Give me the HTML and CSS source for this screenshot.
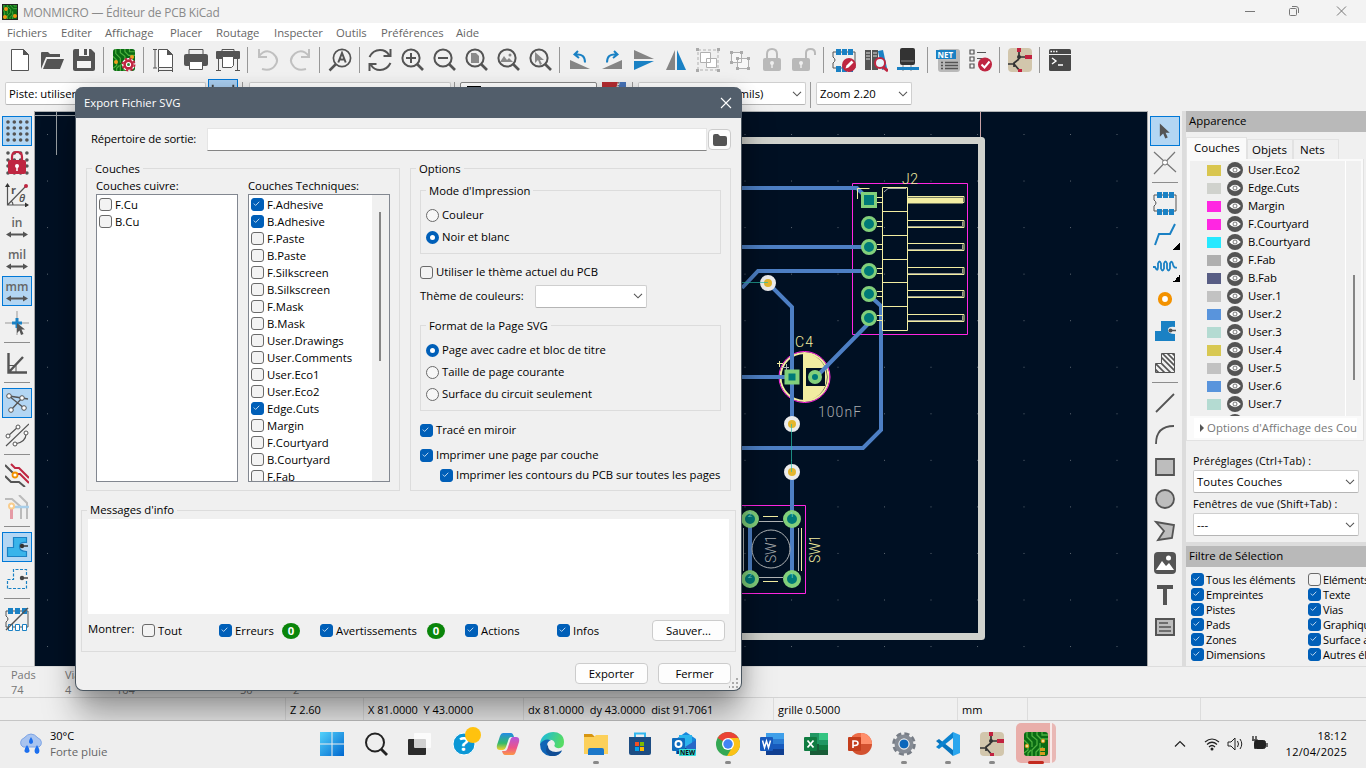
FILE: index.html
```html
<!DOCTYPE html>
<html lang="fr">
<head>
<meta charset="utf-8">
<title>MONMICRO — Éditeur de PCB KiCad</title>
<link rel="stylesheet" href="styles.css">
</head>
<body>
<svg class="defs" width="0" height="0">
<defs>
<symbol id="pcb" viewBox="0 0 24 24"><rect width="24" height="24" rx="3" fill="#0a6b14"/><path d="M3 0v5l5 5v5M8 0v4l5 4v5l-5 5v6M13 0v3l4 4h7M18 0v3h6M0 8l4 4v6l-4 3M4 24v-3l3-3M12 24v-4l4-4v-5M16 24v-6l3-3" fill="none" stroke="#4db13f" stroke-width="1.3"/></symbol>
<symbol id="mag" viewBox="0 0 24 24"><circle cx="11" cy="10" r="8.6" fill="none" stroke="#545454" stroke-width="2"/><path d="M17 16l6 6" stroke="#545454" stroke-width="2.6"/></symbol>
<symbol id="eye" viewBox="0 0 16 16"><circle cx="8" cy="8" r="8" fill="#545454"/><path d="M2.200 8Q8 1.500 13.800 8Q8 14.500 2.200 8z" fill="#fff"/><circle cx="8" cy="8" r="2" fill="#fff" stroke="#777"/></symbol>
<symbol id="tick" viewBox="0 0 13 13"><path d="M3.300 6.600l2.200 2.200 4.300-4.400" fill="none" stroke="#dcecf8" stroke-width="1"/></symbol>
<symbol id="chev" viewBox="0 0 10 6"><path d="M1 .8l4 4 4-4" fill="none" stroke="#555" stroke-width="1.100"/></symbol>
<symbol id="fp" viewBox="0 0 24 24"><path d="M1 4h22v16H1v-5q4-3 0-6z" fill="none" stroke="#545454"/><path d="M4 1h5v6H4zM10 1h5v6h-5zM16 1h5v6h-5zM4 18h5v6H4zM10 18h5v6h-5zM16 18h5v6h-5z" fill="#1a81c4"/></symbol>
<symbol id="lock" viewBox="0 0 24 24"><rect x="3" y="10" width="18" height="13" rx="2" fill="#b9b9b9"/><circle cx="12" cy="15" r="2" fill="#eee"/><path d="M12 15v5" stroke="#eee" stroke-width="1.500"/></symbol>
<symbol id="arrow" viewBox="0 0 24 24"><path d="M7 3v16l4-4 2.500 6 3-1.300-2.600-5.700h5z" fill="#545454"/></symbol>
<symbol id="unit" viewBox="0 0 24 24"><path d="M1 19.500l5-3v2h12v-2l5 3-5 3v-2H6v2z" fill="#545454"/></symbol>
<symbol id="sch" viewBox="0 0 24 24"><rect width="24" height="24" rx="4" fill="#d2c6ac"/><path d="M11 3v8M11 11l-5 4v4M0 16h7M6 16l6 7M11 9h12" fill="none" stroke="#333" stroke-width="1.700"/><path d="M11 0v4M17 9h7M12 21v3" stroke="#c22340" stroke-width="4"/><circle cx="11" cy="9" r="2" fill="#333"/></symbol>
</defs>
</svg>

<div class="screen">
  <header class="title"><svg class="app" viewBox="0 0 16 16"><use href="#pcb"/><g fill="#ef9415"><circle cx="4" cy="5" r="2"/><circle cx="3" cy="13" r="2"/><circle cx="13" cy="12" r="2"/></g><rect x=".5" y=".5" width="15" height="15" fill="none" stroke="#222"/></svg><span>MONMICRO — Éditeur de PCB KiCad</span>
    <svg class="winctl" viewBox="0 0 110 20"><path d="M6 9.500h10M98 4.500l9 9M107 4.500l-9 9M53 4.500h4q2.500 0 2.500 2.500v4" fill="none" stroke="#777"/><rect x="50.500" y="6.500" width="7" height="7" rx="1" fill="none" stroke="#777"/></svg>
  </header>
  <nav class="menu"><span style="width:54px">Fichiers</span><span style="width:44px">Editer</span><span style="width:65px">Affichage</span><span style="width:46px">Placer</span><span style="width:58px">Routage</span><span style="width:62px">Inspecter</span><span style="width:45px">Outils</span><span style="width:75px">Préférences</span><span>Aide</span></nav>

  <div class="toolbar">
    <svg viewBox="0 0 24 24"><path d="M3.500 1.500h12l5 5v16h-17z" fill="#fff" stroke="#545454"/><path d="M15 1v6h6z" fill="#545454"/></svg>
    <svg viewBox="0 0 24 24"><path d="M1 21V5q0-1 1-1h6l2 2h10v3H6z" fill="#545454"/><path d="M7 11h17l-4 10H3z" fill="#545454"/></svg>
    <svg viewBox="0 0 24 24"><path d="M1 3q0-2 2-2h16l4 4v16q0 2-2 2H3q-2 0-2-2z" fill="#545454"/><path d="M7 1h10v7H7zM5 13h14v7H5z" fill="#f4f4f4"/><path d="M12 1h3v6h-3z" fill="#545454"/></svg>
    <i></i>
    <svg viewBox="0 0 24 24"><use href="#pcb" x="1" y="1" width="22" height="22"/><circle cx="4" cy="14" r="2" fill="#efa020"/><circle cx="20" cy="9" r="2" fill="#efa020"/><circle cx="16.500" cy="16.500" r="6.500" fill="#fff"/><circle cx="16.500" cy="16.500" r="3.900" fill="#fff" stroke="#bf2641" stroke-width="2.600"/><circle cx="16.500" cy="16.500" r="6" fill="none" stroke="#bf2641" stroke-width="2" stroke-dasharray="2.400 2.310"/><circle cx="16.500" cy="16.500" r="1.500" fill="#2b8f38"/></svg>
    <i></i>
    <svg viewBox="0 0 24 24"><path d="M6.500 1.500h9l5 5v13h-14z" fill="#fff" stroke="#545454"/><path d="M15 1v6h6z" fill="#545454"/><path d="M1 1.500h4M3 1v19M1 20h4M6 22.500h15M6.500 20v4M20.500 20v4" fill="none" stroke="#545454"/></svg>
    <svg viewBox="0 0 24 24"><path d="M5 1.500h14v6H5z" fill="#eee" stroke="#545454"/><rect y="6" width="24" height="12" rx="2" fill="#545454"/><path d="M5.500 13.500h13v8h-13z" fill="#fff" stroke="#545454"/></svg>
    <svg viewBox="0 0 24 24"><path d="M6 1.500h12v3H6z" fill="#eee" stroke="#545454"/><rect y="3" width="24" height="8" rx="1" fill="#545454"/><path d="M2.500 10v13M21.500 10v13M0 22.500h5M19 22.500h5" stroke="#545454"/><path d="M6.500 8.500h11v9l-2 2h-9z" fill="#fff" stroke="#545454"/></svg>
    <i></i>
    <svg viewBox="0 0 24 24"><path d="M3 1v8h8M3 8q7-8 14-2.500 7 6 2 12-4 6-13 3.500" fill="none" stroke="#c0c0c0" stroke-width="2"/></svg>
    <svg viewBox="0 0 24 24"><path d="M21 1v8h-8M21 8q-7-8-14-2.500-7 6-2 12 4 6 13 3.500" fill="none" stroke="#c0c0c0" stroke-width="2"/></svg>
    <i></i>
    <svg viewBox="0 0 24 24"><circle cx="14" cy="10" r="8.600" fill="none" stroke="#545454" stroke-width="1.700"/><path d="M8 16l-6.500 6.500" stroke="#545454" stroke-width="2.500"/><path d="M10.300 14.500L14 5l3.700 9.500M11.500 11.500h5" fill="none" stroke="#545454" stroke-width="2"/></svg>
    <i></i>
    <svg viewBox="0 0 24 24"><path d="M1.500 9Q5 2 12 2q6 0 9 5M22.500 1v7h-7M22.500 15Q19 22 12 22q-6 0-9-5M1.500 23v-7h7" fill="none" stroke="#545454" stroke-width="2"/></svg>
    <svg viewBox="0 0 24 24"><use href="#mag"/><path d="M6 10h10M11 5v10" stroke="#545454" stroke-width="2"/></svg>
    <svg viewBox="0 0 24 24"><use href="#mag"/><path d="M6 10h10" stroke="#545454" stroke-width="2"/></svg>
    <svg viewBox="0 0 24 24"><use href="#mag"/><path d="M7 5h5l3 3v7H7z" fill="#8a8a8a"/></svg>
    <svg viewBox="0 0 24 24"><use href="#mag"/><path d="M4 14l4-6 3 4 2-2 4 4z" fill="#8a8a8a"/><circle cx="14" cy="7" r="1.500" fill="#8a8a8a"/></svg>
    <svg viewBox="0 0 24 24"><use href="#mag"/><path d="M7 4v11l3-3 2 5 2-1-2-4h4z" fill="#8a8a8a"/></svg>
    <i></i>
    <svg viewBox="0 0 24 24"><path d="M2 12v9h20z" fill="#858585"/><path d="M10 3L6.500 6.500 11 10M8 6.500q9-1 9 8" fill="none" stroke="#1a81c4" stroke-width="2"/></svg>
    <svg viewBox="0 0 24 24"><path d="M22 12v9H2z" fill="#858585"/><path d="M14 3l3.500 3.500L13 10M16 6.500q-9-1-9 8" fill="none" stroke="#1a81c4" stroke-width="2"/></svg>
    <svg viewBox="0 0 24 24"><path d="M2 2v9h20z" fill="#858585"/><path d="M2 22v-9h20z" fill="#1a81c4"/></svg>
    <svg viewBox="0 0 24 24"><path d="M2 22h9V2z" fill="#858585"/><path d="M22 22h-9V2z" fill="#1a81c4"/></svg>
    <svg viewBox="0 0 24 24"><path d="M2 2h20v20H2z" fill="none" stroke="#b0b0b0" stroke-dasharray="3 2"/><path d="M4.500 4.500h10v10h-10zM10.500 10.500h10v9h-10z" fill="#fff" stroke="#b0b0b0"/><path d="M0 0h3v3H0zM21 0h3v3h-3zM0 21h3v3H0zM21 21h3v3h-3z" fill="#aaa"/></svg>
    <svg viewBox="0 0 24 24"><path d="M3.500 4.500h10v10h-10zM9.500 10.500h11v10h-11z" fill="#f8f8f8" stroke="#b0b0b0"/><path d="M2 3h3v3H2zM12 3h3v3h-3zM2 13h3v3H2zM8 9h3v3H8zM19 9h3v3h-3zM8 19h3v3H8zM19 19h3v3h-3z" fill="#aaa"/></svg>
    <svg viewBox="0 0 24 24"><path d="M7 11V6q0-5 5-5t5 5v5" fill="none" stroke="#b9b9b9" stroke-width="2"/><use href="#lock"/></svg>
    <svg viewBox="0 0 24 24"><path d="M14 11V5q0-4 4.500-4T23 5v2" fill="none" stroke="#b9b9b9" stroke-width="2"/><use href="#lock" x="-3" width="24" height="24"/></svg>
    <i></i>
    <svg viewBox="0 0 24 24"><use href="#fp"/><circle cx="17" cy="17" r="7" fill="#bf2641"/><path d="M13.500 20.500l1-3 5-5 2 2-5 5z" fill="#fff"/></svg>
    <svg viewBox="0 0 24 24"><path d="M1 2h6v20H1zM8 2h6v20H8z" fill="#545454"/><path d="M14 3l5-1 4 18-5 2z" fill="#1a81c4"/><path d="M2 5h4M2 8h4M2 11h4M9 5h4M9 8h4" stroke="#ddd"/><circle cx="16" cy="15" r="5" fill="#e8f5fb" stroke="#bf2641" stroke-width="2"/><path d="M19 19l5 4" stroke="#bf2641" stroke-width="3"/></svg>
    <svg viewBox="0 0 24 24"><path d="M7 17v6M15 17v6" stroke="#888"/><rect x="4" width="15" height="17" rx="2" fill="#333"/><path d="M5 13h13" stroke="#888"/><path d="M1 20.500h22" stroke="#1a81c4" stroke-width="3"/></svg>
    <i></i>
    <svg viewBox="0 0 24 24"><rect x="2" y="1" width="22" height="23" rx="3" fill="#b9b9b9"/><rect y="2" width="20" height="9" fill="#1a81c4"/><text x="1.500" y="9.500" class="net">NET</text><path d="M5 14.500h2M9 14.500h13M5 17.500h2M9 17.500h13M5 20.500h2M9 20.500h13" stroke="#545454" stroke-width="1.300"/></svg>
    <svg viewBox="0 0 24 24"><path d="M2 2h4v4H2zM2 9h4v4H2zM2 16h4v4H2zM9 4.500h9M9 10.500h5" fill="none" stroke="#545454" stroke-width="1.200"/><circle cx="17" cy="16.500" r="7" fill="#bf2641"/><path d="M13.500 16.500l3 3 5-6" fill="none" stroke="#fff" stroke-width="2"/></svg>
    <i></i>
    <svg viewBox="0 0 24 24"><use href="#sch"/></svg>
    <i></i>
    <svg viewBox="0 0 24 24"><rect x="1" y="1" width="22" height="22" rx="1.500" fill="#484848"/><path d="M1 6.500h22" stroke="#eee"/><path d="M4 10l4 3-4 3M10 17h5" fill="none" stroke="#fff" stroke-width="1.400"/><path d="M2.500 3.500h7" stroke="#fff" stroke-width="1.500" stroke-dasharray="1.500 1.200"/></svg>
  </div>

  <div class="toolbar2">
    <div class="combo c1">Piste: utiliser</div>
    <div class="bluebtn"><svg viewBox="0 0 30 30"><path d="M4 5v18M26 5v18" stroke="#444" stroke-width="2"/></svg></div><i></i>
    <div class="combo c2"></div><i></i>
    <div class="combo c3"><b></b></div>
    <svg class="pair" viewBox="0 0 24 24"><path d="M0 0h16l-6 20H0z" fill="#b52c31"/><path d="M18 0h6v20h-12z" fill="#4773b8"/><path d="M17 0l-5 20" stroke="#333" stroke-dasharray="1.500 1.500"/></svg><i></i>
    <div class="combo c4">(0,1000 mils)<svg><use href="#chev"/></svg></div><i></i>
    <div class="combo c5">Zoom 2.20<svg><use href="#chev"/></svg></div>
  </div>

  <main class="work">
    <div class="side left">
      <b><svg viewBox="0 0 24 24"><path d="M3 3h20M3 9h20M3 15h20M3 21h20" stroke="#545454" stroke-width="3.600" stroke-linecap="round" stroke-dasharray="0 6.300"/></svg></b>
      <svg viewBox="0 0 24 24"><path d="M3 2h20M3 9h20M3 15h20M3 22h20" stroke="#545454" stroke-width="3.600" stroke-linecap="round" stroke-dasharray="0 6.300"/><path d="M7 10V6q0-5 5-5t5 5v4" fill="none" stroke="#bf2641" stroke-width="2.200"/><rect x="3" y="9" width="18" height="14" rx="2" fill="#bf2641"/><circle cx="12" cy="15" r="2" fill="#fff"/><path d="M12 15v5" stroke="#fff" stroke-width="1.500"/></svg>
      <svg viewBox="0 0 24 24"><path d="M2.500 2v20H23M2.500 22L21 3M8 22q0-3-2-4" fill="none" stroke="#545454" stroke-width="1.200"/><path d="M2.500 0L0 4h5zM24 22l-4-2.500v5z" fill="#333"/><circle cx="21" cy="3" r="2" fill="#bf2641"/><text x="6" y="11" class="r">r</text><text x="14" y="19" class="th">θ</text></svg>
      <svg viewBox="0 0 24 24"><text x="12" y="12" class="un">in</text><use href="#unit"/></svg>
      <svg viewBox="0 0 24 24"><text x="12" y="12" class="un">mil</text><use href="#unit"/></svg>
      <b><svg viewBox="0 0 24 24"><text x="12" y="12" class="un">mm</text><use href="#unit"/></svg></b>
      <svg viewBox="0 0 24 24"><path d="M0 12h24M12 0v24" stroke="#999"/><path d="M7 12h10M12 7v10" stroke="#1a81c4" stroke-width="3"/><path d="M12 12v10l2.500-2.500L16 24l2.500-1-2-4.500H20z" fill="#545454"/></svg>
      <i></i>
      <svg viewBox="0 0 24 24"><path d="M3.500 2v19.500H22M3.500 21.500L18 6" fill="none" stroke="#545454" stroke-width="2.400"/><path d="M4 14.500h7V21" fill="none" stroke="#545454"/></svg>
      <i></i>
      <b><svg viewBox="0 0 24 24"><path d="M4 5l15 12M6 19L17 7M4 5l13 2 6 1" stroke="#545454" fill="none" stroke-width="1.300"/><g fill="#fff" stroke="#545454"><circle cx="4" cy="5" r="2.300"/><circle cx="17" cy="7" r="2.300"/><circle cx="19" cy="17" r="2.300"/><circle cx="6" cy="19" r="2.300"/></g></svg></b>
      <svg viewBox="0 0 24 24"><path d="M1 23L24 1M3 13L14 3M10 21q12-2 11-12" fill="none" stroke="#545454" stroke-width="1.200"/><g fill="#fff" stroke="#545454"><circle cx="3" cy="13" r="2"/><circle cx="13" cy="4" r="2"/><circle cx="21" cy="10" r="2"/><circle cx="10" cy="21" r="2"/></g></svg>
      <i></i>
      <svg viewBox="0 0 24 24"><path d="M6 1l4 4h4l10 10M12 11h3l9 9" fill="none" stroke="#bf2641" stroke-width="2"/><path d="M0 2l9 9M0 13l6 6h8l6 5" fill="none" stroke="#545454" stroke-width="2"/><circle cx="10" cy="12" r="2.500" fill="#fff" stroke="#f39200" stroke-width="1.800"/></svg>
      <svg viewBox="0 0 24 24"><path d="M0 4h7l9 8v12M14 0l8 8v16" fill="none" stroke="#bbb" stroke-width="2"/><path d="M8 12h16" stroke="#a9cfea" stroke-width="2.500"/><path d="M6.500 14v10" stroke="#e59aa5" stroke-width="3"/><circle cx="6.500" cy="11" r="2.500" fill="#fff" stroke="#f9cd8d" stroke-width="2"/></svg>
      <i></i>
      <b><svg viewBox="0 0 24 24"><path d="M2.500 21.500v-9h6v-10h13v5q-7-1-7 4t7 5v5z" fill="#39b4ea" stroke="#1a81c4" stroke-width="1.200"/><circle cx="17" cy="11" r="2.200" fill="#333"/><path d="M17 11h6" stroke="#333" stroke-width="1.500"/></svg></b>
      <svg viewBox="0 0 24 24"><path d="M2.500 21.500v-9h6v-10h13v6M21.500 14v7.500h-19" fill="none" stroke="#1a81c4" stroke-width="1.200" stroke-dasharray="3 1.500"/><circle cx="17" cy="11" r="2.200" fill="#444"/><path d="M17 11h6" stroke="#444" stroke-width="1.500"/></svg>
      <i></i>
      <svg viewBox="0 0 24 24"><path d="M1 4h22v16H1v-5q4-3 0-6z" fill="none" stroke="#545454"/><path d="M3 1h5v6H3zM10 1h5v6h-5zM17 1h5v6h-5z" fill="#1a81c4"/><path d="M3.500 17.500h4v6h-4zM10.500 17.500h4v6h-4zM17.500 17.500h4v6h-4z" fill="#fff" stroke="#1a81c4"/><path d="M1 23L23 1" stroke="#545454" stroke-width="1.400"/></svg>
    </div>

    <svg class="canvas" viewBox="34 111 1114 555">
      <defs><pattern id="grid" x="47" y="134" width="46.500" height="46.550" patternUnits="userSpaceOnUse"><rect width="1" height="1" fill="#5b6570"/></pattern></defs>
      <rect x="34" y="111" width="1114" height="555" fill="#001023"/>
      <rect x="35" y="120" width="1112" height="546" fill="url(#grid)"/>
      <path d="M34 111.500h1114" stroke="#b0b3b5"/><path d="M34.500 111v555M1147.500 111v555" stroke="#a8a8a8"/>
      <path d="M35 115.500h60M56.500 112v43" stroke="#9aa0a4"/>
      <path d="M980.500 112v26" stroke="#c8a2a5"/>
      <path d="M700 140.500h281.500v496H700" fill="none" stroke="#d0d2cd" stroke-width="7" stroke-linejoin="round"/>
      <g stroke="#ff26e2" fill="none"><path d="M852.500 183.500h115v151h-115z"/></g>
      <path d="M700 505.500h105.500v88H700" stroke="#ff26e2" fill="none"/>
      <g fill="none" stroke="#4d7fc4" stroke-width="4"><path d="M735 188h122l8 8M735 247h132M742 288l16-17h110M768 283l24 24v117M735 377h55M816 377l52-53M869 295l12 11v124l-18 18H735M792 472v107M750 519v60"/></g>
      <g fill="none" stroke="#f2eda1"><path d="M857.500 199v-10.500h12"/><path d="M877 197.500h6m-6 5h6M877 221.500h6m-6 5h6M877 244.500h6m-6 5h6M877 268.500h6m-6 5h6M877 291.500h6m-6 5h6M877 315.500h6m-6 5h6"/><path d="M882.500 187.500h25v143h-25zM883 211.500h24M883 235.500h24M883 259.500h24M883 282.500h24M883 306.500h24"/><path d="M907 196.500h57v6h-57M907 220.500h57v7h-57M907 243.500h57v7h-57M907 267.500h57v7h-57M907 290.500h57v7h-57M907 314.500h57v7h-57"/></g>
      <path d="M908 226.500h54.500v-5M908 249.500h54.500v-5M908 273.500h54.500v-5M908 296.500h54.500v-5M908 320.500h54.500v-5" fill="none" stroke="#9c9e90"/>
      <path d="M908 197.500h55v6h-55z" fill="#f2eda1"/><path d="M884 192l4-3.500h18" fill="none" stroke="#aaa"/>
      <circle cx="804.500" cy="377" r="24" fill="#001023" stroke="#f2eda1" stroke-width="2"/><path d="M803 353a24 24 0 0 1 0 48z" fill="#f2eda1"/><circle cx="804.500" cy="377" r="25.500" fill="none" stroke="#ff26e2"/><path d="M792 350v55M742 377h44" stroke="#4d7fc4" stroke-width="4"/><rect x="806" y="368" width="19" height="18" fill="#001023"/><path d="M777 363.500h6M779.500 361v6" stroke="#f2eda1"/><path d="M782 367.500h7M786.500 364v7" stroke="#b0b3b5"/><path d="M818 375l10-10" stroke="#4d7fc4" stroke-width="4"/>
      <g fill="#007a78" stroke="#82d07b" stroke-width="3"><path d="M862.500 193.500h13v13h-13z"/><circle cx="869" cy="224" r="6.500"/><circle cx="869" cy="247" r="6.500"/><circle cx="869" cy="271" r="6.500"/><circle cx="869" cy="294" r="6.500"/><circle cx="869" cy="318" r="6.500"/></g>
      <g fill="#007a78" stroke="#82d07b" stroke-width="4"><path d="M786.500 371.500h11v11h-11z"/><circle cx="815" cy="377" r="5"/></g>
      <g fill="#007a78" stroke="#82d07b" stroke-width="4"><circle cx="750" cy="519" r="7"/><circle cx="792" cy="519" r="7"/><circle cx="750" cy="579" r="7"/><circle cx="792" cy="579" r="7"/></g>
      <g fill="#e3b62f" stroke="#ececec" stroke-width="4"><circle cx="768" cy="283" r="6"/><circle cx="792" cy="424" r="6"/><circle cx="792" cy="472" r="6"/></g>
      <path d="M791.500 424v48M742 282.500h26" stroke="#27bfa8" stroke-opacity=".7"/>
      <g fill="none" stroke="#b0b3b5"><circle cx="771" cy="549" r="19"/><path d="M759 521.500h24M759 577.500h24M743.500 528v43M798.500 528v43"/></g>
      <path d="M763 516.500h15M763 581.500h15M801.500 528v43" stroke="#f2eda1"/>
      <g class="pads"><text x="750" y="517">2</text><text x="792" y="517">1</text><text x="750" y="578">2</text><text x="792" y="578">1</text></g>
      <text class="cad y" x="902" y="184" textLength="16">J2</text><text class="cad y" x="795" y="347" textLength="18">C4</text><text class="cad g" x="818" y="417" textLength="43">100nF</text><text class="cad g" x="-563" y="776" textLength="28" transform="rotate(-90)">SW1</text><text class="cad y" x="-563" y="820" textLength="28" transform="rotate(-90)">SW1</text>
    </svg>

    <div class="side right">
      <b><svg viewBox="0 0 24 24"><use href="#arrow" x="1" y="2" width="20" height="20"/></svg></b>
      <svg viewBox="0 0 24 24"><path d="M1 1l22 20M1 23L22 1" stroke="#777" stroke-width="1.200"/><circle cx="12" cy="11.500" r="2.500" fill="#fff" stroke="#777"/></svg>
      <i></i>
      <svg viewBox="0 0 24 24"><use href="#fp"/></svg>
      <div class="more"><svg viewBox="0 0 24 24"><path d="M2 22l4-11h11l5-10" fill="none" stroke="#1a81c4" stroke-width="2"/></svg></div>
      <div class="more"><svg viewBox="0 0 24 24"><path d="M0 12h2q3 6 3-1V8.500q1.500-4 3 0v5q1.500 4 3 0v-5q1.500-4 3 0v5q1.500 4 3 0v-5q2-4 3 1 1 4 4 3" fill="none" stroke="#1a81c4" stroke-width="1.800"/></svg></div>
      <svg viewBox="0 0 24 24"><circle cx="12" cy="12" r="5" fill="#fff" stroke="#f39200" stroke-width="4.200"/></svg>
      <svg viewBox="0 0 24 24"><path d="M2 22V12h6V2h14v6q-7-1-7 3t7 4v7z" fill="#1a81c4"/><circle cx="17.500" cy="11.500" r="2" fill="#545454"/><path d="M17 11.500h6" stroke="#545454" stroke-width="1.500"/></svg>
      <svg viewBox="0 0 24 24"><clipPath id="zone"><path d="M2.500 21.500v-9h6v-10h13v19z"/></clipPath><path d="M2.500 21.500v-9h6v-10h13v19z" fill="none" stroke="#545454"/><path clip-path="url(#zone)" d="M-4 6l20 20M0 4l20 20M3 1l21 21M7 0l18 18M12 0l12 12M17 0l8 8M-8 8l20 20" stroke="#545454" stroke-width="1.600"/></svg>
      <i></i>
      <svg viewBox="0 0 24 24"><path d="M3 21L21 3" stroke="#545454" stroke-width="1.800"/></svg>
      <svg viewBox="0 0 24 24"><path d="M3 21Q3 3 21 3" fill="none" stroke="#545454" stroke-width="1.800"/></svg>
      <svg viewBox="0 0 24 24"><path d="M3 4h18v16H3z" fill="#bdbdbd" stroke="#545454" stroke-width="1.800"/></svg>
      <svg viewBox="0 0 24 24"><circle cx="12" cy="12" r="9" fill="#bdbdbd" stroke="#545454" stroke-width="1.800"/></svg>
      <svg viewBox="0 0 24 24"><path d="M3 3l18 3-2 13-14 2 6-9z" fill="#bdbdbd" stroke="#545454" stroke-width="1.800"/></svg>
      <svg viewBox="0 0 24 24"><rect x="1" y="1" width="22" height="22" rx="4" fill="#545454"/><path d="M3 19l6-9 4 5 3-3 5 7z" fill="#fff"/><circle cx="15.500" cy="7" r="2.500" fill="#fff"/></svg>
      <svg viewBox="0 0 24 24"><path d="M4 4h16M12 4v18" stroke="#545454" stroke-width="4"/></svg>
      <svg viewBox="0 0 24 24"><path d="M3 4h18v16H3z" fill="#bdbdbd" stroke="#545454" stroke-width="2"/><path d="M6 8h9M6 12h12M6 16h12" stroke="#545454" stroke-width="1.300"/></svg>
    </div>

    <aside class="panel">
      <h2>Apparence</h2>
      <div class="tabs"><span class="on">Couches</span><span>Objets</span><span>Nets</span></div>
      <div class="frame">
        <div class="layers">
          <div><i style="background:#d9c64f"></i><svg><use href="#eye"/></svg>User.Eco2</div>
          <div><i style="background:#d0d2cd"></i><svg><use href="#eye"/></svg>Edge.Cuts</div>
          <div><i style="background:#ff26e2"></i><svg><use href="#eye"/></svg>Margin</div>
          <div><i style="background:#ff26e2"></i><svg><use href="#eye"/></svg>F.Courtyard</div>
          <div><i style="background:#26e9ff"></i><svg><use href="#eye"/></svg>B.Courtyard</div>
          <div><i style="background:#afafaf"></i><svg><use href="#eye"/></svg>F.Fab</div>
          <div><i style="background:#585d84"></i><svg><use href="#eye"/></svg>B.Fab</div>
          <div><i style="background:#c2c2c2"></i><svg><use href="#eye"/></svg>User.1</div>
          <div><i style="background:#5994dc"></i><svg><use href="#eye"/></svg>User.2</div>
          <div><i style="background:#b4dbd2"></i><svg><use href="#eye"/></svg>User.3</div>
          <div><i style="background:#d8c852"></i><svg><use href="#eye"/></svg>User.4</div>
          <div><i style="background:#c2c2c2"></i><svg><use href="#eye"/></svg>User.5</div>
          <div><i style="background:#5994dc"></i><svg><use href="#eye"/></svg>User.6</div>
          <div><i style="background:#b4dbd2"></i><svg><use href="#eye"/></svg>User.7</div>
          <div><i></i><svg><use href="#eye"/></svg></div>
          <u></u>
        </div>
        <div class="opts"><svg viewBox="0 0 5 8"><path d="M0 0l4 4-4 4z" fill="#555"/></svg>Options d'Affichage des Cou</div>
      </div>
      <label class="l1">Préréglages (Ctrl+Tab) :</label>
      <div class="combo">Toutes Couches<svg><use href="#chev"/></svg></div>
      <label class="l2">Fenêtres de vue (Shift+Tab) :</label>
      <div class="combo">---<svg><use href="#chev"/></svg></div>
      <h2 class="h2b">Filtre de Sélection</h2>
      <div class="filter">
        <span class="ck on"><svg><use href="#tick"/></svg>Tous les éléments</span><span class="ck"><svg></svg>Eléments verrouillés</span>
        <span class="ck on"><svg><use href="#tick"/></svg>Empreintes</span><span class="ck on"><svg><use href="#tick"/></svg>Texte</span>
        <span class="ck on"><svg><use href="#tick"/></svg>Pistes</span><span class="ck on"><svg><use href="#tick"/></svg>Vias</span>
        <span class="ck on"><svg><use href="#tick"/></svg>Pads</span><span class="ck on"><svg><use href="#tick"/></svg>Graphiques</span>
        <span class="ck on"><svg><use href="#tick"/></svg>Zones</span><span class="ck on"><svg><use href="#tick"/></svg>Surface avec règles</span>
        <span class="ck on"><svg><use href="#tick"/></svg>Dimensions</span><span class="ck on"><svg><use href="#tick"/></svg>Autres éléments</span>
      </div>
    </aside>
  </main>

  <div class="info"><div style="width:54px">Pads<br>74</div><div style="width:51px">Vias<br>4</div><div style="width:124px">Segments<br>104</div><div style="width:53px">Nets<br>50</div><div>Non<br>2</div></div>
  <div class="status"><span style="width:286px"></span><span style="width:78px">Z 2.60</span><span style="width:160px">X 81.0000&nbsp; Y 43.0000</span><span style="width:250px">dx 81.0000&nbsp; dy 43.0000&nbsp; dist 91.7061</span><span style="width:184px">grille 0.5000</span><span style="width:70px">mm</span><span style="width:173px"></span></div>

  <footer class="task">
    <div class="weather"><svg viewBox="0 0 26 26"><path d="M5 16a5 5 0 0 1 1-9q7-8 14 0a5 5 0 0 1 1 9z" fill="#a9c4ef" stroke="#7ea5e6"/><path d="M13 6q4 6 0 7-4-1 0-7zM9 14q5 7 0 8-5-1 0-8zM19 14q5 8 0 9-5-1 0-9z" fill="#1c6fee"/></svg><div>30°C<br><em>Forte pluie</em></div></div>
    <div class="apps">
      <span><svg viewBox="0 0 24 24"><defs><linearGradient id="w" x2="1" y2="1"><stop stop-color="#53d2fb"/><stop offset="1" stop-color="#0067cf"/></linearGradient></defs><path d="M0 0h11.500v11.500H0zM12.500 0H24v11.500H12.500zM0 12.500h11.500V24H0zM12.500 12.500H24V24H12.500z" fill="url(#w)"/></svg></span>
      <span><svg viewBox="0 0 24 24"><circle cx="11" cy="10.500" r="9" fill="none" stroke="#222" stroke-width="2"/><path d="M17 17l6 6" stroke="#222" stroke-width="2.800"/></svg></span>
      <span><svg viewBox="0 0 24 24"><rect y="7" width="18" height="16" rx="1" fill="#2b2b2b"/><rect x="6" y="1" width="17" height="15" rx="1" fill="#fff" fill-opacity=".78"/></svg></span>
      <span><svg class="help" viewBox="0 0 30 30"><circle cx="12" cy="17" r="11" fill="#0b97d5" stroke="#fff"/><text x="12" y="24" class="q">?</text><circle cx="21" cy="8" r="8" fill="#ffc20e"/></svg></span>
      <span><svg viewBox="0 0 24 24"><defs><linearGradient id="cl" y2="1" x2="0"><stop stop-color="#238ce5"/><stop offset=".6" stop-color="#33b96a"/><stop offset="1" stop-color="#f7d22c"/></linearGradient><linearGradient id="cr" y2="1" x2="0"><stop stop-color="#b356db"/><stop offset=".6" stop-color="#ee5488"/><stop offset="1" stop-color="#fb9846"/></linearGradient></defs><path d="M7 1h8q2 0 3 4h-3q-2 0-3 4l-2 6q-1 3-3 3H4q-4 0-3-5l3-9q1-3 3-3z" fill="url(#cl)"/><path d="M17 23H9q-2 0-3-4h3q2 0 3-4l2-6q1-4 3-4h3q4 0 3 5l-3 9q-1 4-3 4z" fill="url(#cr)"/></svg></span>
      <span><svg viewBox="0 0 24 24"><defs><linearGradient id="ed" y2=".3"><stop stop-color="#16b7e8"/><stop offset="1" stop-color="#55db65"/></linearGradient></defs><path d="M0 12C1-3 24-4 24 10q0 7-7 6-4-1-2-4-1-5-7-4-5 1-8 4z" fill="url(#ed)"/><path d="M0 12q4-6 11-4-6 3-3 9 4 6 14 2-4 6-12 5Q0 22 0 12z" fill="#0f65b6"/><path d="M8 12q-1 8 8 8 4 0 6-2-4 7-11 6-8-3-3-12z" fill="#114d94"/></svg></span>
      <span class="run"><svg viewBox="0 0 24 24"><path d="M0 2h8l3 3H0z" fill="#d79511"/><path d="M0 22V5h10l2-2h12v19z" fill="#fcd05a"/><path d="M4 23v-5q0-2 2-2h12q2 0 2 2v5z" fill="#1b77c9"/></svg></span>
      <span><svg viewBox="0 0 24 24"><path d="M7 6V1.500h10V6" fill="none" stroke="#31b7ef" stroke-width="2"/><path d="M1 5h22v16q0 2-2 2H3q-2 0-2-2z" fill="#1d4d83"/><path d="M7 10h4v4H7z" fill="#f25022"/><path d="M12 10h4v4h-4z" fill="#7fba00"/><path d="M7 15h4v4H7z" fill="#00a4ef"/><path d="M12 15h4v4h-4z" fill="#ffb900"/></svg></span>
      <span><svg viewBox="0 0 24 24"><path d="M4 7L14 0l10 7v15H4z" fill="#1687dc"/><path d="M7 3h13v9l-6 4-7-3z" fill="#2bb4ed"/><path d="M5 11l19 11H5z" fill="#123b7b"/><path d="M24 8v13l-11-6z" fill="#2767c7"/><rect y="6" width="13" height="13" rx="1" fill="#0f6cbd"/><circle cx="6.500" cy="12" r="3" fill="none" stroke="#fff" stroke-width="2"/><rect x="7" y="17" width="17" height="7" rx="1" fill="#35dfdc"/><text x="8" y="23" class="new">NEW</text></svg></span>
      <span class="run"><svg viewBox="0 0 24 24"><circle cx="12" cy="12" r="12" fill="#34a853"/><path d="M12 12L1.600 6A12 12 0 0 1 22.400 6z" fill="#ea4335"/><path d="M12 6h10.400A12 12 0 0 1 11 24l6-10z" fill="#fbc116"/><circle cx="12" cy="12" r="6" fill="#fff"/><circle cx="12" cy="12" r="4.700" fill="#4285f4"/></svg></span>
      <span><svg viewBox="0 0 24 24"><path d="M6 1h18v7H6z" fill="#3f9fe9"/><path d="M6 7h18v6H6z" fill="#2b7cd3"/><path d="M6 12h18v6H6z" fill="#185abd"/><path d="M6 17h18v6H6z" fill="#103f91"/><rect y="5" width="13" height="14" rx="1" fill="#185abd"/><path d="M2.500 8.500l2 7 2-6.500 2 6.500 2-7" fill="none" stroke="#fff" stroke-width="1.500"/></svg></span>
      <span><svg viewBox="0 0 24 24"><path d="M6 1h18v22H6z" fill="#185c37"/><path d="M15 1h9v7h-9z" fill="#33c481"/><path d="M6 1h9v11H6zM15 8h9v5h-9z" fill="#219763"/><path d="M15 13h9v5h-9z" fill="#107c41"/><rect y="5" width="13" height="14" rx="1" fill="#107c41"/><path d="M3.500 8.500l6 7M9.500 8.500l-6 7" stroke="#fff" stroke-width="1.800"/></svg></span>
      <span><svg viewBox="0 0 24 24"><circle cx="13" cy="12" r="11" fill="#d35230"/><path d="M13 1v11h11A11 11 0 0 0 13 1z" fill="#ff8f6b"/><path d="M4 4a11 11 0 0 1 9-3v11H4z" fill="#ed6c47"/><rect y="5" width="13" height="14" rx="1" fill="#c43e1c"/><path d="M5 16V9h2q3 0 3 2.200T7 13.500H5" fill="none" stroke="#fff" stroke-width="1.600"/></svg></span>
      <span class="run"><svg viewBox="0 0 24 24"><circle cx="12" cy="12" r="10.300" fill="none" stroke="#777d86" stroke-width="3" stroke-dasharray="5 3.100"/><circle cx="12" cy="12" r="7.500" fill="#ddd" stroke="#858b94" stroke-width="4"/><circle cx="12" cy="12" r="5" fill="#0b67bb" stroke="#eee"/></svg></span>
      <span class="run"><svg viewBox="0 0 24 24"><path d="M17 0v24L0 9l3-2 14 11z" fill="#0874bd"/><path d="M17 0v6L3 17l-3-2z" fill="#0b83d0"/><path d="M17 0l7 3v18l-7 3z" fill="#2aa6ee"/></svg></span>
      <span class="run"><svg viewBox="0 0 24 24"><use href="#sch"/></svg></span>
      <span class="run active"><svg viewBox="0 0 24 24"><use href="#pcb"/><circle cx="3" cy="14" r="1.800" fill="#f2dc90" stroke="#d99b20"/><circle cx="19" cy="9" r="1.800" fill="#f2dc90" stroke="#d99b20"/><path d="M16 16h5v3h-5zM16 20h5v3h-5z" fill="#d59b22"/></svg></span>
    </div>
    <svg class="tray" viewBox="0 0 100 20"><path d="M5 12.500l5-5 5 5" fill="none" stroke="#222" stroke-width="1.200"/><g fill="none" stroke="#222" stroke-width="1.200"><path d="M35 8q7-6 14 0M37 10.500q5-4.500 10 0M39 13q3-3 6 0"/><path d="M58 8h3l4-4v12l-4-4h-3zM67.500 7q2 3 0 6M70 5q3.500 5 0 10" stroke-width="1"/></g><circle cx="42" cy="15" r="1.500" fill="#222"/><rect x="84.500" y="6.500" width="11" height="8" rx="2" fill="#222" stroke="#222"/><path d="M97 9v4M83 2v3M86 2v3M82 6h5v3l-2 2v4" stroke="#222" stroke-width="1.300" fill="none"/></svg>
    <div class="clock">18:12<br>12/04/2025</div>
  </footer>
</div>

<section class="dialog">
  <header>Export Fichier SVG<svg viewBox="0 0 12 12"><path d="M1 1l10 10M11 1L1 11" stroke="#fff" stroke-width="1.100"/></svg></header>
  <div class="outrow"><label>Répertoire de sortie:</label><div class="field"></div><button class="folder"><svg viewBox="0 0 14 12"><path d="M0 2q0-2 2-2h3l2 2h5q2 0 2 2v6q0 2-2 2H2q-2 0-2-2z" fill="#545454"/></svg></button></div>
  <div class="cols">
    <fieldset class="g couches"><legend>Couches</legend>
      <div class="lists">
        <div><label>Couches cuivre:</label><div class="list"><span class="ck"><svg></svg>F.Cu</span><span class="ck"><svg></svg>B.Cu</span></div></div>
        <div><label>Couches Techniques:</label><div class="list">
          <span class="ck on"><svg><use href="#tick"/></svg>F.Adhesive</span><span class="ck on"><svg><use href="#tick"/></svg>B.Adhesive</span><span class="ck"><svg></svg>F.Paste</span><span class="ck"><svg></svg>B.Paste</span><span class="ck"><svg></svg>F.Silkscreen</span><span class="ck"><svg></svg>B.Silkscreen</span><span class="ck"><svg></svg>F.Mask</span><span class="ck"><svg></svg>B.Mask</span><span class="ck"><svg></svg>User.Drawings</span><span class="ck"><svg></svg>User.Comments</span><span class="ck"><svg></svg>User.Eco1</span><span class="ck"><svg></svg>User.Eco2</span><span class="ck on"><svg><use href="#tick"/></svg>Edge.Cuts</span><span class="ck"><svg></svg>Margin</span><span class="ck"><svg></svg>F.Courtyard</span><span class="ck"><svg></svg>B.Courtyard</span><span class="ck"><svg></svg>F.Fab</span><u></u></div></div>
      </div>
    </fieldset>
    <fieldset class="g options"><legend>Options</legend>
      <fieldset class="g mode"><legend>Mode d'Impression</legend><span class="rd">Couleur</span><span class="rd on">Noir et blanc</span></fieldset>
      <span class="ck o1"><svg></svg>Utiliser le thème actuel du PCB</span>
      <div class="theme"><label>Thème de couleurs:</label><div class="combo"><svg><use href="#chev"/></svg></div></div>
      <fieldset class="g format"><legend>Format de la Page SVG</legend><span class="rd on">Page avec cadre et bloc de titre</span><span class="rd">Taille de page courante</span><span class="rd">Surface du circuit seulement</span></fieldset>
      <span class="ck on o2"><svg><use href="#tick"/></svg>Tracé en miroir</span>
      <span class="ck on o3"><svg><use href="#tick"/></svg>Imprimer une page par couche</span>
      <span class="ck on o4"><svg><use href="#tick"/></svg>Imprimer les contours du PCB sur toutes les pages</span>
    </fieldset>
  </div>
  <fieldset class="g msgs"><legend>Messages d'info</legend>
    <div class="log"></div>
    <div class="show"><label>Montrer:</label><span class="ck" style="width:77px"><svg></svg>Tout</span><span class="ck on" style="width:63px"><svg><use href="#tick"/></svg>Erreurs</span><b>0</b><span class="ck on" style="width:107px"><svg><use href="#tick"/></svg>Avertissements</span><b class="b2">0</b><span class="ck on" style="width:92px"><svg><use href="#tick"/></svg>Actions</span><span class="ck on" style="width:95px"><svg><use href="#tick"/></svg>Infos</span><button>Sauver...</button></div>
  </fieldset>
  <div class="foot"><button>Exporter</button><button>Fermer</button></div>
  <svg class="grip" viewBox="0 0 10 10"><path d="M8 0v2M8 4v2M8 8v2M4 4v2M4 8v2M0 8v2" stroke="#aaa" stroke-width="2"/></svg>
</section>
</body>
</html>
```
FILE: styles.css
```css
*,*:before,*:after{box-sizing:border-box}
body{margin:0;width:1366px;height:768px;overflow:hidden;background:#f0f0f0;font:11.3px/16px "Open Sans","Noto Sans",sans-serif;color:#000}
svg{display:block;flex:none}
.defs{position:absolute}
.screen{width:1366px;height:768px;display:flex;flex-direction:column;overflow:hidden}
.title{height:23px;flex:none;background:#f3f3f3;display:flex;align-items:center;color:#8a8a8a;font-size:11.9px;letter-spacing:-.18px;padding:0 17px 0 2px}
.title .app{width:16px;height:16px;margin-right:5px}
.winctl{width:110px;height:20px;margin-left:auto}
.menu{height:18px;flex:none;background:#fff;color:#666;display:flex;align-items:center;padding:2px 0 0 7px;white-space:nowrap;letter-spacing:-.02px}
.menu span{flex:none}
.toolbar{height:38px;flex:none;display:flex;align-items:center;padding-left:4px}
.toolbar>svg{width:24px;height:24px;margin:0 4px}
.toolbar>i{width:1px;height:26px;background:#979797;margin:0 4px 0 3px}
.net{font:bold 8px "Open Sans",sans-serif;fill:#fff}
.toolbar2{height:32px;flex:none;display:flex;padding:3px 0 0 5px;overflow:hidden;align-items:flex-start}
.toolbar2>i{width:1px;height:26px;background:#999}
.combo{height:23px;border:1px solid #cfcfcf;border-bottom-color:#b5b5b5;border-radius:2px;background:#fff;display:flex;align-items:center;padding:0 7px 0 3px;white-space:nowrap;color:#000}
.combo svg{width:10px;height:6px;margin-left:auto}
.c1{width:201px}.c2{width:202px;margin:0 3px 0 6px}.c3{width:137px;margin-left:5px;border-color:#888;padding-left:6px;align-items:flex-start}
.c3 b{width:14px;height:12px;background:#000;margin-top:3px}
.c4{width:168px;margin:0 4px 0 5px;padding-left:58px;padding-right:3px}.c5{width:96px;margin-left:5px;padding-right:3px}
.bluebtn{width:30px;height:30px;margin:-3px 4px 0 2px;border:1px solid #0078d7;background:#a8cdef}
.pair{width:24px;height:24px;margin:0 6px 0 5px}
.work{height:555px;flex:none;display:flex}
.side{display:flex;flex-direction:column;align-items:center;padding-top:4px;width:34px;flex:none}
.side>svg{width:24px;height:24px;margin:4px 0}
.side>b,.more{width:30px;height:30px;margin:1px 0;display:flex;align-items:center;justify-content:center;flex:none}
.side>b{border:1px solid #0078d7;background:#b3d6f3}
.side svg{width:24px;height:24px}
.side>i{width:26px;height:1px;background:#8d8d8d;margin:3px 0 4px;flex:none}
.more{background:linear-gradient(135deg,transparent 50%,#000 50%) right bottom/7px 7px no-repeat}
.r{font:bold 11px "Open Sans";fill:#545454}.th{font:italic 600 11px "Open Sans";fill:#545454}
.un{font:600 12px "Open Sans",sans-serif;fill:#666;text-anchor:middle}
.canvas{width:1114px;height:555px}
.cad{font:300 14px Roboto,sans-serif}
.y{fill:#f2eda1}.g{fill:#a9acae}
.pads{font:8px "Open Sans";fill:#77d5cc;text-anchor:middle}
.panel{width:184px;border-left:4px solid #dcdcdc;height:555px;overflow:hidden;flex:none;letter-spacing:.12px;white-space:nowrap}
.panel h2{margin:0;height:21px;background:#b9b9b9;font:inherit;line-height:20px;padding-left:3px;font-size:11.400px;letter-spacing:0}
.tabs{height:22px;margin-top:5px;display:flex;align-items:flex-end;font-size:11.500px;letter-spacing:0}
.tabs span{height:20px;width:46px;border:1px solid #e2e2e2;border-bottom:0;padding:2px 0 0 4px}
.tabs .on{width:61px;height:22px;background:#fafafa;padding:2px 0 0 7px}
.tabs span:last-child{padding-left:6px}
.frame{height:282px;width:178px;background:#fafafa;border:1px solid #e2e2e2;border-top:0;padding:2px 2px 0 3px}
.layers{height:255px;background:linear-gradient(#fff,#fff) 155px 0/1px 100% no-repeat #f0f0f0;overflow:hidden;position:relative;letter-spacing:-.08px}
.layers>div{display:flex;height:18px;align-items:center;padding-left:17px}
.layers i{width:14px;height:11px;margin-right:6px}
.layers svg{width:16px;height:16px;margin-right:5px}
.layers u{position:absolute;left:163px;top:114px;width:2px;height:105px;background:#858585}
.opts{height:20px;background:#fff;margin:2px 4px 0;display:flex;align-items:center;color:#777;padding-left:6px;overflow:hidden;font-size:11.400px;letter-spacing:.03px}
.opts svg{width:5px;height:8px;margin-right:2px}
.panel label{display:block;padding-left:7px;font-size:10.700px;letter-spacing:.12px}
.l1{margin-top:12px}.l2{margin-top:3px}
.panel .combo{width:166px;margin:1px 0 0 7px;padding-right:3px}
.panel .h2b{margin-top:6px;border-top:4px solid #dcdcdc;height:25px;line-height:19px}
.filter{display:grid;grid-template-columns:117px 150px;grid-auto-rows:15px;padding:5px 0 0 5px;font-size:11px;letter-spacing:-.15px}
.ck{display:flex;align-items:center;white-space:nowrap}
.ck svg{width:13px;height:13px;border:1px solid #6a6a6a;border-radius:3px;background:#f3f3f3;margin-right:3px}
.filter .ck svg{margin-right:2px}
.ck.on svg{background:#005fb8;border-color:#005fb8}
.ck svg use{transform:translate(-1px,-1px)}
.info{height:32px;flex:none;border-top:1px solid #ddd;border-bottom:1px solid #d4d4d4;display:flex;padding-left:11px;color:#777;line-height:15px;font-size:11px}
.status{height:23px;flex:none;border-bottom:1px solid #c6c6c6;display:flex;font-size:11px;line-height:23px;white-space:pre}
.status span{border-right:1px solid #dcdcdc;padding-left:4px}
.task{height:47px;flex:none;background:#eee;display:flex;align-items:center;position:relative;z-index:5;padding-bottom:1px}
.weather{width:310px;display:flex;align-items:center;padding-left:18px;font-size:11px}
.weather svg{width:26px;height:26px;margin-right:6px}
.weather em{font-style:normal;color:#666;font-size:11.500px}
.apps{display:flex}
.apps span{width:44px;height:42px;display:flex;align-items:center;justify-content:center;position:relative}
.apps svg{width:24px;height:24px}
.apps .help{width:30px;height:30px;margin:-4px 0 0 6px}
.q{font:bold 20px "Open Sans";fill:#fff;text-anchor:middle}.new{font:bold 6.500px "Open Sans";fill:#111}
.run:after{content:"";position:absolute;left:19px;bottom:1px;width:6px;height:3px;border-radius:2px;background:#888}
.active:before{content:"";position:absolute;left:2px;top:0;width:40px;height:40px;border-radius:5px;background:linear-gradient(90deg,#e9aeaa 34px,#f9e9e8 34px,#f9e9e8 36px,#e9b8b5 36px)}
.active svg{position:relative}
.active:after{width:16px;left:14px;background:#c32a1f}
.tray{width:100px;height:20px;margin-left:112px}
.clock{margin-right:19px;margin-left:auto;text-align:right;font-size:11px;letter-spacing:.3px}
.dialog{position:absolute;z-index:2;left:75px;top:87px;width:667px;height:604px;background:#f0f0f0;border-radius:8px;border:1px solid #49555f;border-top:0;box-shadow:0 26px 34px -2px rgba(0,0,0,.36),0 2px 18px rgba(0,0,0,.16);padding:0 0 0 5px}
.dialog>header{height:31px;margin:0 -1px 0 -6px;background:#525e6b;color:#fff;border-radius:8px 8px 0 0;display:flex;align-items:center;justify-content:space-between;padding:0 10px 0 9px}
.dialog>header svg{width:12px;height:12px}
.outrow{display:flex;height:23px;margin:10px 0 0 10px;align-items:center}
.outrow label{width:116px;letter-spacing:-.13px;margin-top:-2px}
.field{width:500px;height:23px;background:#fff;border:1px solid #e5e5e5;border-bottom-color:#858585}
button{font:inherit;color:#000;background:#fdfdfd;border:1px solid #ccc;border-radius:4px;padding:0;height:21px;width:73px;line-height:19px}
.folder{width:23px;margin-left:1px;display:flex;align-items:center;justify-content:center}
.folder svg{width:14px;height:12px}
.g{margin:0;padding:0;border:1px solid #dcdcdc;min-width:0}
legend{padding:0 3px;margin-left:5px;line-height:17px;height:16px}
.cols{display:flex;gap:10px;margin:9px 0 0 5px}
.couches{width:314px;height:331px}.options{width:321px;height:331px;padding-left:9px}
.options>legend{margin-left:-4px}
.lists{display:flex;gap:10px;padding:1px 0 0 9px}
.list{width:142px;height:288px;border:1px solid #828790;background:#fff;overflow:hidden;padding:1px 0 0 2px;position:relative;margin-top:1px}
.lists label{display:block;line-height:17px;height:16px}
.list .ck{height:17px}
.list u{position:absolute;right:0;top:0;width:17px;height:286px;background:linear-gradient(#858585,#858585) 7px 17px/2px 149px no-repeat #f0f0f0}
.mode{width:301px;height:72px;margin-top:6px;padding-left:5px}
.rd{display:flex;align-items:center;height:22px}
.mode legend,.format legend{margin-left:0}
.mode .rd:nth-child(2){margin-top:6px}
.rd:before{content:"";width:13px;height:13px;border:1px solid #6a6a6a;border-radius:50%;background:#f7f7f7;margin-right:3px}
.rd.on:before{border:4px solid #005fb8;background:#fff}
.options>.ck{height:16px}
.o1{margin-top:10px}
.theme{display:flex;height:24px;align-items:center;margin-top:4px}
.theme label{width:115px}.theme .combo{width:112px;padding-right:3px}
.format{width:301px;height:94px;margin-top:9px;padding-left:5px}
.format .rd:nth-child(2){margin-top:6px}
.o2{margin-top:11px}.o3{margin-top:9px}.o4{margin:4px 0 0 20px;letter-spacing:-.02px}
.msgs{width:655px;height:150px;margin-top:11px;padding-left:6px}
.msgs legend{margin-left:-1px;line-height:15px}
.log{height:95px;width:641px;background:#fff;margin-top:1px}
.show{display:flex;align-items:center;height:33px}
.show label{width:54px;margin-top:-3px}
.show b{width:18px;height:16px;border-radius:50%;background:#0a850a;color:#fff;text-align:center;line-height:16px;margin-right:20px}
.foot{display:flex;gap:10px;margin:11px 0 0 494px}
.grip{position:absolute;right:2px;bottom:2px;width:10px;height:10px}
```
